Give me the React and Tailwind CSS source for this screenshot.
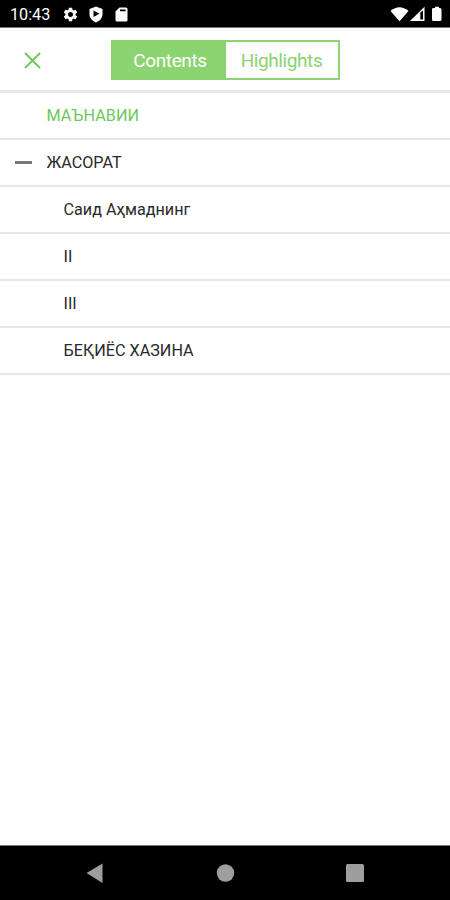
import React, { useState } from "react";
import { MdSettings } from "react-icons/md";

const chapters = [
  { id: 1, title: "МАЪНАВИИ", level: 0, current: true },
  { id: 2, title: "ЖАСОРАТ", level: 0, expanded: true },
  { id: 3, title: "Саид Аҳмаднинг", level: 1 },
  { id: 4, title: "II", level: 1 },
  { id: 5, title: "III", level: 1 },
  { id: 6, title: "БЕҚИЁС ХАЗИНА", level: 1 },
];

const StatusBar = () => (
  <div className="flex h-7 shrink-0 items-center border-b border-[#777] bg-black text-white">
    <span className="ml-[10px] w-[52px] pt-[4px] text-[16.2px] leading-none">
      10:43
    </span>
    <MdSettings className="mt-[2px] h-[17px] w-[17px]" />
    <svg className="mt-[2px] ml-[9px] h-[17px] w-4" viewBox="0 0 16 17">
      <path
        fill="currentColor"
        fillRule="evenodd"
        d="M8 .5 14.5 3v5c0 4-2.7 7-6.5 8.500C4.200 15 1.500 12 1.500 8V3ZM5.500 4.500v6.500L11.500 7.800Z"
      />
    </svg>
    <svg className="mt-[2px] ml-[11px] h-[15px] w-[13px]" viewBox="0 0 13 15">
      <path
        fill="currentColor"
        fillRule="evenodd"
        d="M4.500.5H11Q12.500.5 12.500 2V13Q12.500 14.500 11 14.500H2Q.5 14.500.5 13V4.500ZM5 2.500V4.300H10.600V2.500Z"
      />
    </svg>
    <svg
      className="mt-[1px] mr-[7px] ml-auto h-4 w-[53px]"
      viewBox="0 0 53 16"
      fill="currentColor"
    >
      <path d="M.5 5Q9.500-2.500 18.500 5L9.500 15.300Z" />
      <path
        fillRule="evenodd"
        d="M34.500.8V15H20ZM30.300 6.500V13.500H33V4.500Z"
      />
      <path d="M43 2H45V.8H49V2H50Q51.500 2 51.500 3.500V13.500Q51.500 15 50 15H43.500Q42 15 42 13.500V3.500Q42 2 43 2Z" />
    </svg>
  </div>
);

const Tabs = ({ active, onChange }) => (
  <div className="ml-[68px] flex h-10 w-[229px] border-2 border-[#8bd471] text-[19px] tracking-[-0.4px]">
    <button
      onClick={() => onChange("contents")}
      className={`w-[112px] pt-[3px] pl-[2px] ${active === "contents" ? "bg-[#8bd471] text-white" : "text-[#8bd471]"}`}
    >
      Contents
    </button>
    <button
      onClick={() => onChange("highlights")}
      className={`flex-1 border-l border-[#8bd471] pt-[3px] pr-px ${active === "highlights" ? "bg-[#8bd471] text-white" : "text-[#8bd471]"}`}
    >
      Highlights
    </button>
  </div>
);

const App = () => {
  const [activeTab, setActiveTab] = useState("contents");

  return (
    <div className="flex h-[900px] w-[450px] flex-col overflow-hidden bg-white font-['Roboto',sans-serif]">
      <StatusBar />

      <header className="flex h-[65px] shrink-0 items-center border-b-[3px] border-[#e8e8e8] bg-[#fefefe] pt-[2px]">
        <button aria-label="Close" className="ml-[23px] mr-px text-[#6cc85a]">
          <svg
            className="h-[19px] w-[19px]"
            viewBox="0 0 19 19"
            fill="none"
            stroke="currentColor"
            strokeWidth="1.800"
          >
            <path d="M2 2 17 17M17 2 2 17" />
          </svg>
        </button>
        <Tabs active={activeTab} onChange={setActiveTab} />
      </header>

      <ul className="flex-1 text-[16.2px] text-[#2a2a2a]">
        {chapters.map((chapter) => (
          <li
            key={chapter.id}
            className="flex h-[47px] items-center border-b-2 border-[#e7e7e7]"
          >
            <span
              className={`flex shrink-0 items-center pl-[15px] ${chapter.level === 0 ? "w-[46.5px]" : "w-[63.5px]"}`}
            >
              {chapter.expanded && (
                <span className="h-[3px] w-[17px] bg-[#777]" />
              )}
            </span>
            <span
              className={`pt-[2px] ${chapter.current ? "text-[#6cc85a]" : ""}`}
            >
              {chapter.title}
            </span>
          </li>
        ))}
      </ul>

      <nav className="flex h-[55px] shrink-0 items-center border-t border-[#777] bg-black">
        <svg
          className="h-[54px] w-[450px]"
          viewBox="0 0 450 54"
          fill="#9e9e9e"
        >
          <path d="M86.500 27 102.500 17.500V37Z" />
          <circle cx="225.500" cy="27" r="8.700" />
          <rect x="346" y="18" width="18" height="18" rx="1.500" />
        </svg>
      </nav>
    </div>
  );
};

export default App;
